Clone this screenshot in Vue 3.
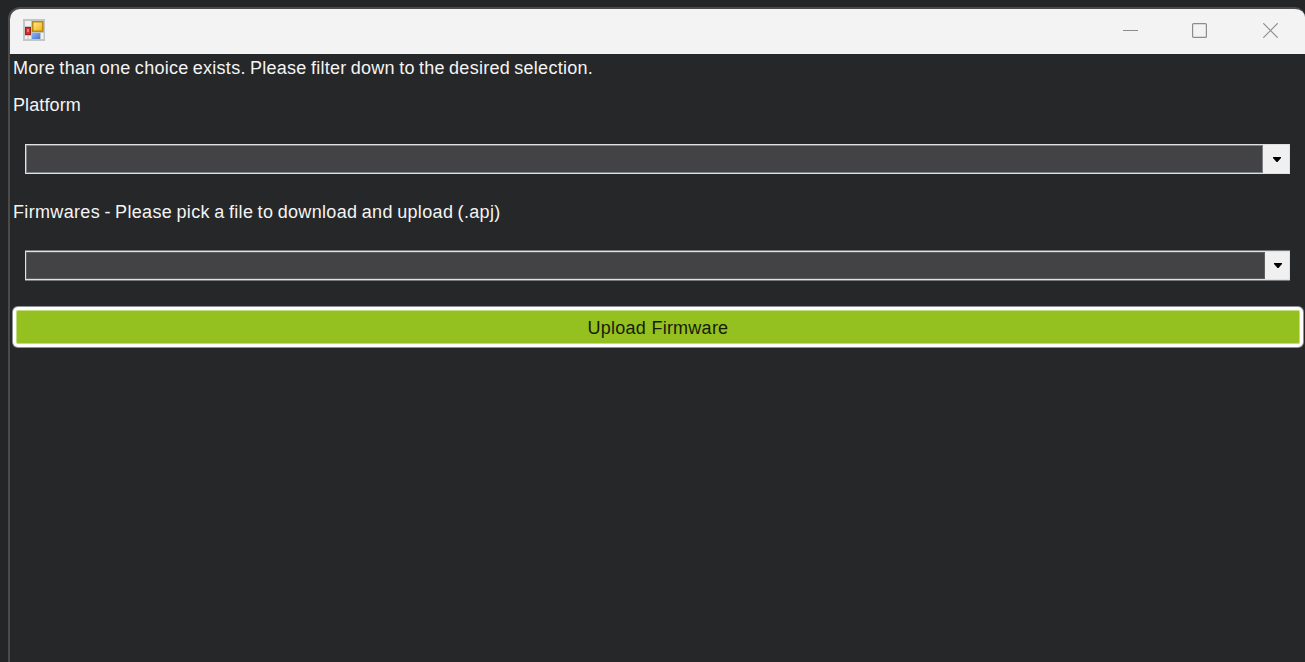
<script setup>
const platform = ''
const firmware = ''
</script>

<template>
  <main class="desktop">
    <section class="window">
      <header class="titlebar">
        <svg class="app-icon" width="22" height="22" viewBox="0 0 22 22">
          <defs>
            <linearGradient id="gold" x1="0" y1="0" x2="1" y2="1">
              <stop offset="0" stop-color="#ffe98c" /><stop offset="1" stop-color="#f3b416" />
            </linearGradient>
            <linearGradient id="blue" x1="0" y1="0" x2="1" y2="1">
              <stop offset="0" stop-color="#8fb4f4" /><stop offset="1" stop-color="#4478d2" />
            </linearGradient>
          </defs>
          <rect width="22" height="22" fill="#c3c5c5" />
          <rect x="2" y="2" width="6" height="5" fill="#f0f2f2" />
          <rect x="2" y="8" width="6" height="8" fill="#a3201c" />
          <rect x="3" y="9" width="4" height="6" fill="#c9342a" />
          <path d="M5 10v3" stroke="#f0b0a0" stroke-width="1.200" />
          <rect x="9" y="2" width="11.500" height="11" fill="#b98a10" />
          <rect x="10.500" y="3.500" width="8.500" height="8" fill="url(#gold)" />
          <rect x="9" y="14" width="8" height="6" fill="url(#blue)" />
          <rect x="18" y="14" width="2.500" height="6" fill="#eef2f8" />
          <rect x="2" y="17" width="2.500" height="3" fill="#f0f2f2" />
          <rect x="5.500" y="17" width="2.500" height="3" fill="#f0f2f2" />
        </svg>
        <div class="controls">
          <svg width="15" height="15" viewBox="0 0 15 15"><path d="M0 7.500h15" /></svg>
          <svg width="15" height="15" viewBox="0 0 15 15"><rect x=".6" y=".6" width="13.800" height="13.800" rx="1" /></svg>
          <svg width="15" height="15" viewBox="0 0 15 15"><path d="M.3.3l14.400 14.400M14.700.3L.3 14.700" /></svg>
        </div>
      </header>
      <div class="body">
        <p class="label intro">More than one choice exists. Please filter down to the desired selection.</p>
        <p class="label platform">Platform</p>
        <div class="combo first">
          <span class="value">{{ platform }}</span>
          <span class="drop"><svg width="8" height="5" viewBox="0 0 8 5"><path d="M0 0h8v1L4.500 5h-1L0 1z" /></svg></span>
        </div>
        <p class="label firmwares">Firmwares - Please pick a file to download and upload (.apj)</p>
        <div class="combo second">
          <span class="value">{{ firmware }}</span>
          <span class="drop"><svg width="8" height="5" viewBox="0 0 8 5"><path d="M0 0h8v1L4.500 5h-1L0 1z" /></svg></span>
        </div>
        <button class="upload"><span>Upload Firmware</span></button>
      </div>
    </section>
  </main>
</template>

<style>
body { background: #242527; }
</style>

<style scoped>
.desktop {
  box-sizing: border-box;
  height: 662px;
  padding: 7px 0 0 8px;
  background: #242527;
  overflow: hidden;
  font-family: "Liberation Sans", Arial, sans-serif;
}
.window {
  box-sizing: border-box;
  height: 655px;
  border: 2px solid #4a4b4b;
  border-right: 0;
  border-bottom: 0;
  border-radius: 12px 10px 0 0;
  background: #262729;
  overflow: hidden;
}
.titlebar {
  box-sizing: border-box;
  display: flex;
  justify-content: space-between;
  height: 45px;
  padding: 10px 27px 0 13px;
  background: #f3f3f3;
}
.controls {
  display: flex;
  padding-top: 4px;
}
.controls svg {
  fill: none;
  stroke: #8c8c8c;
  stroke-width: 1.2;
}
.controls svg + svg { margin-left: 54px; }
.controls svg:last-child { margin-left: 56px; }
.body {
  display: flex;
  flex-direction: column;
}
.label {
  margin: 0 0 0 3px;
  height: 22px;
  line-height: 22px;
  font-size: 18px;
  color: #f4f4f4;
  white-space: nowrap;
}
.intro {
  margin-top: 3px;
  letter-spacing: 0.27px;
  word-spacing: -1px;
}
.platform {
  margin-top: 15px;
  letter-spacing: 0.1px;
}
.combo {
  box-sizing: border-box;
  display: flex;
  height: 30px;
  margin: 28px 15px 0;
  border: 1px solid #dfe2e3;
  background: #434345;
}
.value {
  flex: 1;
  box-shadow: inset 0 0 0 1px #7f8284;
}
.drop {
  box-sizing: border-box;
  width: 26px;
  padding: 1px 0 0 2px;
  display: flex;
  align-items: center;
  justify-content: center;
  background: #f0f0f0;
}
.second {
  height: 29px;
  box-shadow: 0 -1px #77797a, 0 1px #77797a;
}
.second .value { box-shadow: inset 0 0 0 1px #5c5e5f; }
.second .drop {
  width: 24px;
  padding-top: 0;
}
.firmwares {
  margin-top: 27px;
  letter-spacing: 0.34px;
  word-spacing: -1px;
}
.upload {
  box-sizing: border-box;
  height: 40px;
  margin: 27px 2px 0 3px;
  padding: 0;
  border: 3px solid #fff;
  border-radius: 5px;
  box-shadow: 0 0 0 1px #909192, inset 0 0 0 1px #c3dc80;
  background: #94c11f;
  color: #171c08;
  font: 18px/36px "Liberation Sans", Arial, sans-serif;
  letter-spacing: 0.25px;
}
.upload span {
  display: block;
  height: 34px;
}
</style>
